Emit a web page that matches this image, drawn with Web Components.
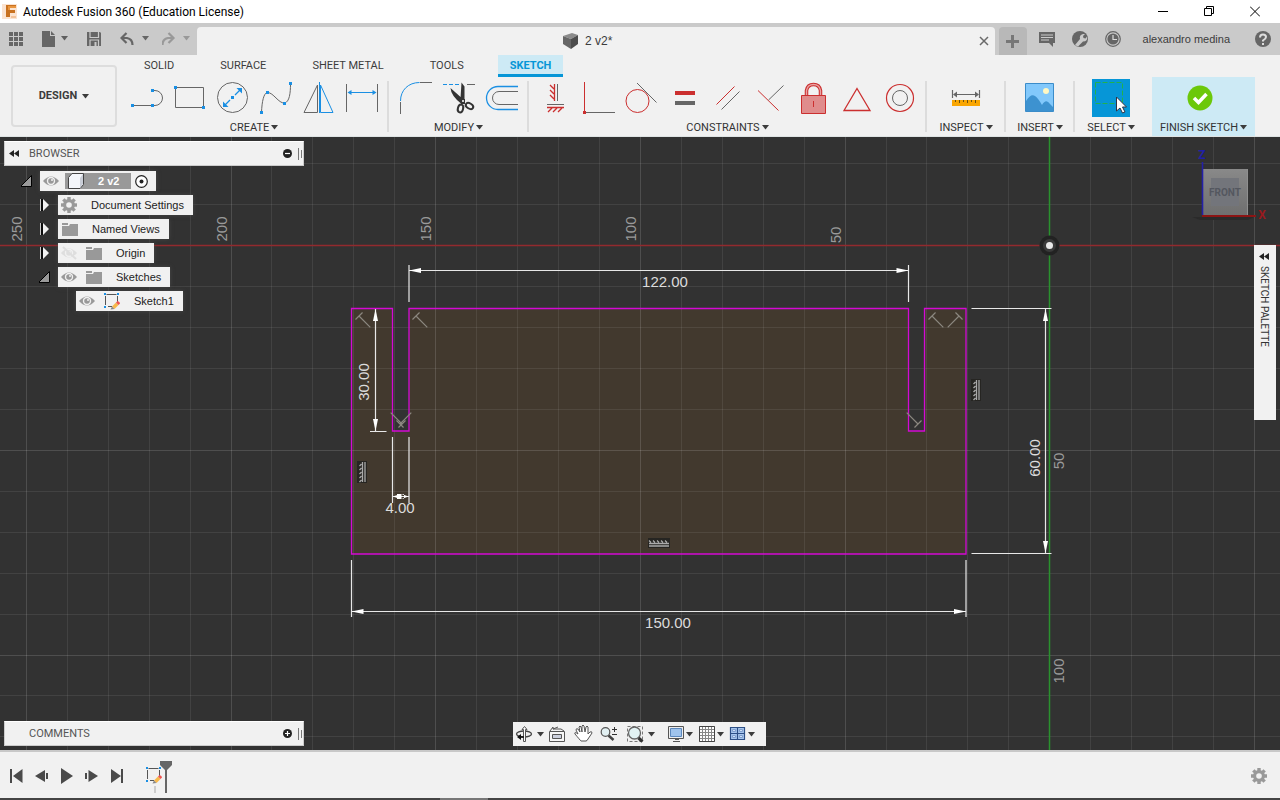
<!DOCTYPE html>
<html lang="en">
<head>
<meta charset="utf-8">
<title>Autodesk Fusion 360 (Education License)</title>
<style>
  html, body { margin: 0; height: 100%; }
  body { font: 11px/16px "Liberation Sans", Arial, sans-serif; color: #3c3c3c; background: #323232; }
</style>
</head>
<body>
<fusion-app></fusion-app>
<script>
const RESET = `
  *, *::before { box-sizing: border-box; }
  button { font: inherit; color: inherit; background: none; border: 0; padding: 0; margin: 0; display: flex; align-items: center; justify-content: center; }
  svg { display: block; flex: none; }
`;

/* Every icon: [viewBox, markup]. Drawn at one unit per pixel. */
const R = '#cb2f2f', G = '#666', B = '#1a8fe3';
const dot = (x, y) => `<rect x="${x - 1}" y="${y - 1}" width="3" height="3" fill="${B}"/>`;
const caret = (x, y, c = '#3c3c3c') => `<path d="M${x} ${y}h7l-3.5 4.500z" fill="${c}"/>`;
const eye = (c = '#999') => `<path d="M0 8Q8-1 16 8Q8 17 0 8z" fill="${c}"/><circle cx="8" cy="8" r="4.200" fill="#f1f1f1"/><circle cx="8" cy="8" r="2.800" fill="${c}"/><circle cx="9" cy="7" r="1" fill="#f1f1f1"/>`;
const teeth = [0, 45, 90, 135, 180, 225, 270, 315].map(a => `<path d="M6.300 0h3.400v4h-3.400z" transform="rotate(${a} 8 8)"/>`).join('');
const sketchIcon = `<path d="M3.500 2.500h10M14.500 4v6M9 14.500H5M2.500 4v9" stroke="#555" fill="none"/><path d="M1 1h2v2H1zM14 1h2v2h-2zM1 14h2v2H1z" fill="${B}"/><path d="M9 14.500l4-4 2.500 2.500-4 4z" fill="#f7b84b"/><path d="M13 10.500l1.500-1.500q2.500.500 2.500 2.500L15.500 13z" fill="#ef5350"/><path d="M9 14.500L7.500 17.500l4-.500z" fill="#888"/>`;
const ICONS = {
  app: ['2 2 16 17', `<rect x="2" y="3" width="15" height="15" fill="#fbe3d0"/><path d="M6 4h10v3h-6v2h5v3h-5v4H6z" fill="#c8711f"/><path d="M8 5h8v2h-6v2H8z" fill="#e9953f"/><path d="M11 15h5v2h-5z" fill="#f3c39a"/>`],
  min: ['1159 5 10 11', `<path d="M1159 10.500h10" stroke="#000"/>`],
  restore: ['1204 5 10 11', `<path d="M1204.500 7.500h7v7h-7zM1206.500 7.500v-2h7v7h-2" fill="none" stroke="#000"/>`],
  close: ['1250 5 10 11', `<path d="M1250 5.500l10 10M1260 5.500l-10 10" stroke="#000"/>`],
  apps: ['9 31 14 16', [0, 1, 2].map(i => [0, 1, 2].map(j => `<rect x="${9 + 5 * i}" y="${32 + 5 * j}" width="4" height="4"/>`).join('')).join('')],
  file: ['42 31 26 16', `<path d="M42 31h8v5h5v11H42zM51 31l4 4h-4z"/>${caret(61, 36, '#5f5f5f')}`],
  save: ['87 31 14 16', `<path d="M87 32h13l1 1v13h-14z"/><path d="M90 32v5.500h8.500V32M90 46v-6h8.500v6" fill="none" stroke="#cacaca" stroke-width="1.200"/><path d="M94.500 42h2v4h-2z" fill="#cacaca"/>`],
  undo: ['120 31 29 16', `<path d="M122 38h5q5.500 1 5.500 7" fill="none" stroke="#666" stroke-width="2.200"/><path d="M126.500 33l-5 5 5 5" fill="none" stroke="#666" stroke-width="2.200"/>${caret(142, 36, '#666')}`],
  redo: ['162 31 29 16', `<path d="M173 38h-5q-5.500 1-5.500 7" fill="none" stroke="#999" stroke-width="2.200"/><path d="M168.500 33l5 5-5 5" fill="none" stroke="#999" stroke-width="2.200"/>${caret(183, 36, '#999')}`],
  cube: ['565 33 16 16', `<path d="M565 36l9-3 6 2-7 4z" fill="#8b8b8b"/><path d="M565 36l8 3v10l-8-5z" fill="#666"/><path d="M573 39l7-4v9l-7 5z" fill="#4c4c4c"/>`],
  tabclose: ['979 36 10 10', `<path d="M980 37l8 8M988 37l-8 8" stroke="#6a6a6a" stroke-width="1.500"/>`],
  plus: ['1007 34 13 13', `<path d="M1007 39h5v-5h3v5h5v3h-5v5h-3v-5h-5z" fill="#777"/>`],
  comment: ['1039 31 16 16', `<path d="M1039 32h16v11h-2v4l-4-4h-10z"/><path d="M1041 35h12M1041 37.500h12M1041 40h8" stroke="#cacaca"/>`],
  wrench: ['1072 31 16 16', `<circle cx="1080" cy="39" r="8"/><path d="M1075 45l5-6q-1-4 3-5l2 0-2 2 .500 2 2 .500 1.500-2q1 5-4 5l-5 5z" fill="#cacaca"/>`],
  clock: ['1105 31 16 16', `<circle cx="1113" cy="39" r="7.300" fill="none" stroke="#666" stroke-width="1.200"/><circle cx="1113" cy="39" r="5.600"/><path d="M1113 35v4.500h4" stroke="#ddd" stroke-width="1.200" fill="none"/>`],
  help: ['1255 31 16 16', `<circle cx="1263" cy="39" r="8"/><path d="M1260 37.500q0-3 3-3t3 2.500q0 1.500-3 3.500v1" fill="none" stroke="#ddd" stroke-width="2"/><path d="M1262 43h2v2h-2z" fill="#ddd"/>`],

  line: ['125 78 43 40', `<path d="M132 105.500h20M152 90.500h3a7.500 7.500 0 0 1 0 15h-3" fill="none" stroke="${G}"/>${dot(132, 105)}${dot(152, 90)}${dot(152, 105)}`],
  rect: ['168 78 43 40', `<path d="M175.500 87.500h28v20h-28z" fill="none" stroke="${G}"/>${dot(175, 87)}${dot(203, 107)}`],
  circle: ['211 78 43 40', `<circle cx="232.500" cy="97.500" r="15" fill="none" stroke="${G}"/><path d="M225 105l5-5M235 95l5-5" stroke="${B}" stroke-width="1.300"/><path d="M223 107v-5.500l5.500 5.500zM242 88h-5.500l5.500 5.500z" fill="${B}"/>${dot(232, 97)}`],
  spline: ['254 78 43 40', `<path d="M261.500 112c.500-10 2-19 6-19.500 6 0 11 11 17 10.500 5-1 6-10 6-19" fill="none" stroke="${G}"/>${dot(261, 112)}${dot(267, 92)}${dot(284, 103)}${dot(290, 83)}`],
  mirror: ['297 78 43 40', `<path d="M317.500 85v27.500h-13.500z" fill="none" stroke="${G}"/><path d="M320.500 85v27.500h12.500zM319.500 82v31" fill="none" stroke="${B}"/>`],
  dimension: ['340 78 43 40', `<path d="M346.500 84v28M377.500 84v28" stroke="${G}"/><path d="M350 92.500h24" stroke="${B}"/><path d="M347.500 92.500l4-2.500v5zM376.500 92.500l-4-2.500v5z" fill="${B}"/>`],
  fillet: ['394 78 43 40', `<path d="M400.500 102v12M420 82.500h12" stroke="${G}"/><path d="M400.500 101c0-11 8-18.500 19-18.500" fill="none" stroke="${B}"/>`],
  trim: ['437 78 43 40', `<path d="M443 84.500h17" stroke="${B}" stroke-dasharray="4 2"/><path d="M467 84.500h8" stroke="${G}"/><path d="M461.500 82.500l3 4v14l-4-2zM450.500 88l14 12.500-3.500 3q-10-8-10.500-15.500z" fill="#333"/><path d="M461 99h4v5h-4z" fill="#333"/><circle cx="463" cy="101" r="1" fill="#fff"/><ellipse cx="460.500" cy="108.500" rx="2.600" ry="4" fill="none" stroke="#333" stroke-width="2" transform="rotate(15 460.500 108.500)"/><ellipse cx="469.500" cy="106" rx="2.600" ry="4" fill="none" stroke="#333" stroke-width="2" transform="rotate(-60 469.500 106)"/>`],
  offset: ['480 78 43 40', `<path d="M518 86.500H498a11.500 11.500 0 0 0 0 23H518" fill="none" stroke="${B}" stroke-width="1.300"/><path d="M518 91.500H499a6.500 6.500 0 0 0 0 13H518" fill="none" stroke="${G}"/>`],
  hv: ['534 78 43 40', `<path d="M557.500 84v17M547 104.500h17" stroke="${G}"/><path d="M554.500 84v17M547 107.500h17M554 89l-4-4M554 94l-4-4M554 99l-4-4M552 108l-4 4M557 108l-4 4M562 108l-4 4" stroke="${R}" stroke-width="1.300"/>`],
  coincident: ['577 78 43 40', `<path d="M584.500 82v30" stroke="${R}"/><path d="M586 112.500h29" stroke="${G}"/><path d="M583 111h3v3h-3z" fill="${R}"/>`],
  tangent: ['620 78 43 40', `<circle cx="637.500" cy="101" r="11.500" fill="none" stroke="${R}"/><path d="M637 83l19.500 19.500" stroke="${G}"/>`],
  equal: ['663 78 43 40', `<path d="M675 91h20v4h-20z" fill="${R}"/><path d="M675 101h20v4h-20z" fill="${G}"/>`],
  parallel: ['706 78 43 40', `<path d="M716.500 104.500l18-18" stroke="${R}"/><path d="M721.500 109.500l18-18" stroke="${G}"/>`],
  perpendicular: ['749 78 43 40', `<path d="M758 90.500l20.500 20" stroke="${R}"/><path d="M768.500 100l15-14.500" stroke="${G}"/>`],
  lock: ['792 78 43 40', `<path d="M806.500 95v-4.500q1-6 7-6t7 6V95" fill="none" stroke="${R}" stroke-width="3.500"/><path d="M806.500 95v-4.500q1-6 7-6t7 6V95" fill="none" stroke="#e9a3a3" stroke-width="1.400"/><path d="M801.500 95.500h24v18h-24z" fill="#e08c8c" stroke="${R}"/><path d="M813.500 101v6" stroke="${R}"/>`],
  midpoint: ['835 78 43 40', `<path d="M857 88.500l13 22h-26z" fill="none" stroke="${R}" stroke-width="1.300"/>`],
  concentric: ['878 78 43 40', `<circle cx="900" cy="98" r="13.500" fill="none" stroke="${R}" stroke-width="1.200"/><circle cx="900" cy="98" r="7.500" fill="none" stroke="${G}"/>`],
  inspect: ['945 78 43 40', `<path d="M952.500 90v8M979.500 90v8M955 94.500h22" stroke="${G}" stroke-width="1.200"/><path d="M953 94.500l4-3v6zM979 94.500l-4-3v6z" fill="${G}"/><path d="M952 100h28v6h-28z" fill="#f9a602"/><path d="M955.500 100v2M959.500 100v3M963.500 100v2M967.500 100v3M971.500 100v2M975.500 100v3" stroke="#6b5010"/>`],
  insert: ['1019 78 43 40', `<path d="M1025.500 83.500h28v28h-28z" fill="#82c8fb" stroke="#3b8cc9"/><path d="M1026 101q5-8 9-5 3 2 7 9 4-7 8-1l3 3v4h-27z" fill="#3d92d0"/><circle cx="1046" cy="91" r="3" fill="#fff8c4"/>`],
  select: ['1094 78 38 40', `<path d="M1094 79h38v38h-38z" fill="#0696d7"/><path d="M1097.500 82.500h27v21h-27z" fill="none" stroke="#22b14c" stroke-dasharray="5 2"/><path d="M1118.500 97v14l3.500-3 2.500 5 2.500-1-2.500-5h4z" fill="#fff" stroke="#334"/>`],
  finish: ['1182 78 43 40', `<circle cx="1200" cy="98" r="12.500" fill="#6cc80a"/><path d="M1194 98l4.500 4.500 8-8.500" fill="none" stroke="#fff" stroke-width="3.500"/>`],
  caret: ['0 0 7 5', `<path d="M0 0h7L3.500 4.500z" fill="#3c3c3c"/>`],

  collapse: ['0 0 10 7', `<path d="M5 0v7L0 3.500zM10 0v7L5 3.500z" fill="#222"/>`],
  minus: ['0 0 9 9', `<circle cx="4.500" cy="4.500" r="4.500" fill="#222"/><path d="M2 4.500h5" stroke="#fff" stroke-width="1.200"/>`],
  add: ['0 0 9 9', `<circle cx="4.500" cy="4.500" r="4.500" fill="#222"/><path d="M2 4.500h5M4.500 2v5" stroke="#fff" stroke-width="1.200"/>`],
  grip: ['0 0 4 12', `<path d="M.500 0v12M3.500 2v8" stroke="#777"/>`],
  open: ['0 0 11 12', `<path d="M10.500.500v11h-11z" fill="#999" stroke="#000"/>`],
  shut: ['0 0 11 12', `<path d="M1.500 0v12" stroke="#ccc"/><path d="M4 0l6 6-6 6z" fill="#f1f1f1"/><path d="M3 0v12" stroke="#000" stroke-width="1.500"/>`],
  eye: ['0 0 16 16', eye()],
  hidden: ['0 0 16 16', `<g>${eye('#dedede')}</g><path d="M2 2l13 12" stroke="#dedede" stroke-width="2"/>`],
  gear: ['0 0 16 16', `<g fill="#999">${teeth}<circle cx="8" cy="8" r="6"/></g><circle cx="8" cy="8" r="2.800" fill="#f1f1f1"/>`],
  folder: ['0 0 17 16', `<path d="M1 2h6v2H1zM1 5h7l1-2h8v12H1z" fill="#999"/>`],
  body: ['0 0 16 16', `<path d="M.500 4.500L4 .500h11.500v11l-3.500 4H.500z" fill="#f4f6fa" stroke="#444"/><path d="M12 5l3-4v10l-3 4z" fill="#c9cdd6"/>`],
  radio: ['0 0 13 13', `<circle cx="6.500" cy="6.500" r="5.800" fill="#fff" stroke="#222" stroke-width="1.200"/><circle cx="6.500" cy="6.500" r="2" fill="#222"/>`],
  sketch: ['0 0 17 18', sketchIcon],

  orbit: ['513 722 33 24', `<ellipse cx="524" cy="734" rx="7.500" ry="3" fill="none" stroke="#444" stroke-width="1.300"/><path d="M523.500 741.500v-12h-1.500l2.500-3 2.500 3h-1.500v12z" fill="#fff" stroke="#555"/><path d="M517 737l4-3v6z" fill="#111"/><path d="M520 737h4" stroke="#111" stroke-width="1.500"/>${caret(537, 732)}`],
  look: ['546 722 24 24', `<path d="M549.500 731.500h15v10h-15z" fill="#f6f6f6" stroke="#555"/><path d="M552.500 734.500h9v4h-9z" fill="#ccd0dd" stroke="#555"/><path d="M550 731l3-4v2h8l3 2M553 729l5-2" fill="none" stroke="#555"/>`],
  pan: ['570 722 26 24', `<path d="M578 734l-2-4q0-2 2-1l2 3-1-5q1-2 2 0l1 5 0-6q1-2 2 0l1 6 1-5q1-2 2 0l0 7 2-2q2-1 2 1l-4 6q-1 2-2 2h-5q-1-1-6-7-1-3 3 0z" fill="#fff" stroke="#555"/>`],
  zoom: ['596 722 26 24', `<circle cx="605.500" cy="732" r="4.300" fill="#e2f0f2" stroke="#555" stroke-width="1.200"/><path d="M608.500 735.500l5 4.500" stroke="#444" stroke-width="2.500"/><path d="M612 729.500h5M614.500 727v5M612 734.500h5" stroke="#333"/>`],
  fit: ['622 722 39 24', `<path d="M627.500 726.500h15v15h-15z" fill="none" stroke="#777" stroke-dasharray="3 2"/><circle cx="634.500" cy="733" r="6" fill="#e2f2f3" stroke="#666" stroke-width="1.300"/><path d="M638.500 738l4 3.500" stroke="#333" stroke-width="3"/>${caret(648, 732)}`],
  display: ['661 722 34 24', `<path d="M668.500 726.500h15v12h-15z" fill="#eee" stroke="#555"/><path d="M670.500 728.500h11v8h-11z" fill="#9fc3ec" stroke="#5c88bd"/><path d="M673 741.500h7M675 739.500h4" stroke="#555"/>${caret(686, 732)}`],
  grid: ['695 722 31 24', `<path d="M699.500 726.500h15v15h-15zM702.500 726v16M705.500 726v16M708.500 726v16M711.500 726v16M699 729.500h16M699 732.500h16M699 735.500h16M699 738.500h16" fill="#fff" stroke="#888"/><path d="M699.500 726.500h15v15h-15z" fill="none" stroke="#444"/>${caret(717, 732)}`],
  views: ['726 722 40 24', `<path d="M730.500 727.500h7v6h-7zM737.500 727.500h7v6h-7zM730.500 733.500h7v6h-7zM737.500 733.500h7v6h-7z" fill="#a9c7ee" stroke="#2d4f86" stroke-width="1.200"/><path d="M732.500 729.500h3v2h-3zM739.500 729.500h3v2h-3zM732.500 735.500h3v2h-3zM739.500 735.500h3v2h-3z" fill="#cfe0f5" stroke="#7f9fcf"/>${caret(748, 732)}`],

  first: ['0 0 14 14', `<path d="M1 0v14" stroke="#4a4a4a" stroke-width="2"/><path d="M12.500 0v14L3 7z" fill="#4a4a4a"/>`],
  prev: ['0 0 14 14', `<path d="M10 1v12L0 7z" fill="#4a4a4a"/><path d="M12 4v6" stroke="#4a4a4a" stroke-width="2"/>`],
  play: ['0 0 14 16', `<path d="M1 0v16l12-8z" fill="#4a4a4a"/>`],
  next: ['0 0 14 14', `<path d="M3.500 1v12L13 7z" fill="#4a4a4a"/><path d="M1 4v6" stroke="#4a4a4a" stroke-width="2"/>`],
  last: ['0 0 14 14', `<path d="M12 0v14" stroke="#4a4a4a" stroke-width="2"/><path d="M1 0v14l10-7z" fill="#4a4a4a"/>`],
  feature: ['146 759 28 34', `<g transform="translate(145 766)">${sketchIcon}</g><path d="M154 786h2v7h-2z" fill="#ccc"/><path d="M160 761h12v4l-5 5v23h-2v-23l-5-5z" fill="#666"/>`],
};
const icon = name => {
  const [vb, body] = ICONS[name], [, , w, h] = vb.split(' ');
  return `<svg width="${w}" height="${h}" viewBox="${vb}" fill="#666" aria-hidden="true">${body}</svg>`;
};

function define(tag, css, render) {
  customElements.define(tag, class extends HTMLElement {
    constructor() { super(); this.attachShadow({ mode: 'open' }); }
    connectedCallback() {
      const t = document.createElement('template');
      t.innerHTML = `<style>${RESET}${css}</style>${render(this)}`;
      this.shadowRoot.replaceChildren(t.content.cloneNode(true));
    }
  });
}
const btn = (name, label, cls = '') => `<button class="${cls}" aria-label="${label}">${icon(name)}</button>`;

define('title-bar', `
  :host { display: flex; align-items: center; height: 23px; padding: 0 20px 0 2px; background: #fff; color: #000; font: 12px/16px Roboto, sans-serif; }
  span { margin-left: 5px; flex: 1; }
  .win { display: flex; gap: 36px; }
`, () => `${icon('app')}<span><slot></slot></span>
  <div class="win">${btn('min', 'Minimize')}${btn('restore', 'Restore')}${btn('close', 'Close')}</div>`);

define('app-bar', `
  :host { display: flex; height: 32px; background: #cacaca; }
  .quick { display: flex; align-items: center; padding-left: 9px; width: 197px; flex: none; }
  .quick button + button { margin-left: 19px; }
  .quick button:nth-child(5) { margin-left: 13px; }
  .tab { flex: 1; margin-top: 4px; background: #f1f1f1; border-radius: 4px 4px 0 0; display: flex; align-items: center; padding: 0 6px 0 0; font-size: 12px; }
  .doc { flex: 1; display: flex; align-items: center; justify-content: center; gap: 6px; }
  .new { width: 28px; margin: 4px 12px 0 4px; background: #b8b8b8; border-radius: 4px 4px 0 0; }
  .tools { display: flex; align-items: center; gap: 17px; }
  .user { padding: 0 25px 0 22px; }
  .help { padding-right: 9px; }
`, () => `<div class="quick">${btn('apps', 'Data panel')}${btn('file', 'File')}${btn('save', 'Save')}${btn('undo', 'Undo')}${btn('redo', 'Redo')}</div>
  <div class="tab"><div class="doc">${icon('cube')}<span>2 v2*</span></div>${btn('tabclose', 'Close tab')}</div>
  ${btn('plus', 'New tab', 'new')}
  <div class="tools">${btn('comment', 'Comments')}${btn('wrench', 'Extensions')}${btn('clock', 'Job status')}</div>
  <button class="user">alexandro medina</button>${btn('help', 'Help', 'help')}`);

define('ribbon-group', `
  :host { display: flex; flex-direction: column; align-items: center; }
  .icons { display: flex; height: 42px; align-items: flex-start; }
  .label { gap: 2px; height: 16px; font: 11px/16px Roboto, sans-serif; color: #333; white-space: nowrap; }
  .label svg { margin-bottom: 2px; }
`, el => `<div class="icons">${el.getAttribute('icons').split(' ').map(n => btn(n, n)).join('')}</div>
  <button class="label"><slot></slot>${icon('caret')}</button>`);

define('tool-ribbon', `
  :host { display: flex; background: #f1f1f1; height: 82px; padding-left: 11px; border-bottom: 1px solid #dfe4e4; font: 11px/16px Roboto, sans-serif; }
  .design { width: 106px; height: 62px; margin: 10px 8px 0 0; border: 2px solid #ddd; border-radius: 4px; gap: 5px; font-weight: 700; flex: none; }
  .main { flex: 1; display: flex; flex-direction: column; }
  nav { display: flex; height: 22px; padding-left: 7px; }
  nav button { padding: 0 12px; margin-right: 22px; height: 22px; }
  nav .on { background: #cdeaf5; color: #0696d7; font-weight: 700; border-bottom: 3px solid #0696d7; padding-top: 3px; }
  .row { display: flex; height: 59px; }
  hr { width: 2px; height: 51px; margin: 4px 5px 0 4px; border: 0; background: #dcdcdc; flex: none; }
  ribbon-group { padding-top: 1px; flex: none; }
  .w68 { width: 68px; } .w58 { width: 58px; } .w62 { width: 62px; }
  .done { width: 103px; margin-left: 10px; background: #cdeaf5; }
`, () => `<button class="design">DESIGN ${icon('caret')}</button>
  <div class="main">
    <nav><button>SOLID</button><button>SURFACE</button><button>SHEET METAL</button><button>TOOLS</button><button class="on">SKETCH</button></nav>
    <div class="row">
      <ribbon-group icons="line rect circle spline mirror dimension">CREATE</ribbon-group><hr>
      <ribbon-group icons="fillet trim offset">MODIFY</ribbon-group><hr>
      <ribbon-group icons="hv coincident tangent equal parallel perpendicular lock midpoint concentric">CONSTRAINTS</ribbon-group><hr>
      <ribbon-group class="w68" icons="inspect">INSPECT</ribbon-group><hr>
      <ribbon-group class="w58" icons="insert">INSERT</ribbon-group><hr>
      <ribbon-group class="w62" icons="select">SELECT</ribbon-group>
      <ribbon-group class="done" icons="finish">FINISH SKETCH</ribbon-group>
    </div>
  </div>`);

define('panel-bar', `
  :host { display: flex; align-items: center; width: 300px; height: 25px; padding: 0 1px 0 4px; background: #f1f1f1; border: 1px solid #ccc; border-top-color: #fff; font: 11px/16px Roboto, sans-serif; color: #555; }
  .lead { width: 20px; justify-content: flex-start; }
  span { flex: 1; }
  .grip { margin-left: 6px; }
`, el => `<button class="lead" aria-label="Collapse">${el.hasAttribute('collapsible') ? icon('collapse') : ''}</button>
  <span><slot></slot></span>${btn(el.getAttribute('action'), 'Toggle panel')}<div class="grip">${icon('grip')}</div>`);

define('tree-row', `
  :host { display: flex; align-items: center; height: 24px; padding-left: calc(var(--level) * 18px); color: #222; }
  .toggle { width: 19px; margin-left: -1px; justify-content: flex-start; }
  .box { display: flex; align-items: center; height: 20px; background: #f1f1f1; padding: 0 9px 0 3px; box-shadow: 0 0 4px #4a4a4a; white-space: nowrap; }
  .box svg { margin-right: 8px; }
  .name { margin-left: 6px; }
  .sel { display: flex; align-items: center; height: 16px; margin: 0 4px 0 -2px; padding: 0 12px 0 3px; background: #999; color: #fff; font-weight: 700; }
  .sel svg { margin-right: 8px; }
  .root { padding-right: 8px; } .root > button svg { margin: 0; }
`, el => {
  const icons = el.getAttribute('icons').split(' ').map(icon);
  const t = el.getAttribute('toggle');
  const toggle = t ? btn(t, 'Expand', 'toggle') : '<span class="toggle"></span>';
  return toggle + (el.hasAttribute('root')
    ? `<div class="box root">${icons[0]}<div class="sel">${icons[1]}<span class="name"><slot></slot></span></div>${btn('radio', 'Activate')}</div>`
    : `<div class="box">${icons.join('')}<span class="name"><slot></slot></span></div>`);
});

define('nav-bar', `
  :host { display: flex; background: #f1f1f1; height: 24px; }
`, () => ['orbit', 'look', 'pan', 'zoom', 'fit', 'display', 'grid', 'views'].map(n => btn(n, n)).join(''));

define('sketch-palette', `
  :host { display: flex; flex-direction: column; align-items: center; gap: 6px; width: 22px; height: 175px; padding: 8px 2px 0 0; box-sizing: border-box; background: #f1f1f1; font: 10px/16px Roboto, sans-serif; color: #333; }
  span { writing-mode: vertical-rl; }
`, () => `${btn('collapse', 'Expand palette')}<span><slot></slot></span>`);

define('sketch-drawing', `
  :host { display: block; }
  svg { width: 100%; height: 100%; }
  text { font: 15px "Liberation Sans", Arial, sans-serif; text-anchor: middle; fill: #dcdcdc; }
  .axis text { fill: #9a9a9a; }
  .cube text { font: 700 10px Roboto, sans-serif; fill: #54575f; }
  .cube .letter { font-size: 12px; }
`, () => {
  let grid = '';
  for (let i = 0; i < 31; i++) {
    const x = Math.round(1254 - i * 40.94) + .5, major = i % 5 === 0;
    grid += `<path d="M${x} 137V750" stroke="#fff" stroke-opacity="${major ? .14 : .08}"/>`;
  }
  for (let i = -2; i < 13; i++) {
    const y = Math.round(245 + i * 40.95) + .5, major = i % 5 === 0;
    if (i) grid += `<path d="M0 ${y}H1280" stroke="#fff" stroke-opacity="${major ? .14 : .08}"/>`;
  }
  const v = (x, y, s) => `<text transform="translate(${x} ${y}) rotate(-90)" dy="5">${s}</text>`;
  const tri = (x, y, a) => `<path d="M0 0l12-2.500v5z" transform="translate(${x} ${y}) rotate(${a})" fill="#fff"/>`;
  const perp = (x, y, a) => `<path d="M-5 0h10M0 0v16" transform="translate(${x} ${y}) rotate(${a})"/>`;
  const fixed = (x, y, a) => `<g transform="translate(${x} ${y}) rotate(${a})"><path d="M-11-5h22V5h-22z" fill="#262522"/><path d="M-10 .500h20M-10 3h20M-10-2.500l2 2M-6-2.500l2 2M-2-2.500l2 2M2-2.500l2 2M6-2.500l2 2" stroke="#aaa" stroke-width="1.300" fill="none"/></g>`;
  return `<svg viewBox="0 137 1280 613" preserveAspectRatio="xMaxYMin slice" role="img" aria-label="Sketch with dimensions">
    <defs><linearGradient id="c" x1="0" y1="0" x2="0" y2="1"><stop offset="0" stop-color="#898989"/><stop offset="1" stop-color="#6f6f6f"/></linearGradient></defs>
    <path d="M0 137h1280v613H0z" fill="#323232"/>
    <path d="M351.500 308.500h41v122.500h16.500v-122.500h499.500v122.500h16v-122.500H966V554H351.500z" fill="#42392e"/>
    ${grid}
    <path d="M0 245.500H1280" stroke="#922a2e" stroke-width="1.300"/><path d="M1049.500 137V750" stroke="#2a912e" stroke-width="1.500"/>
    <g class="axis">${v(17, 229, 250)}${v(222, 229, 200)}${v(426, 229, 150)}${v(631, 229, 100)}${v(836, 235, 50)}${v(1059, 461, 50)}${v(1059, 671, 100)}</g>
    <path d="M351.500 308.500h41v122.500h16.500v-122.500h499.500v122.500h16v-122.500H966V554H351.500z" fill="none" stroke="#d40ad4" stroke-width="1.300"/>
    <g fill="none" stroke="#8c8880" stroke-width="1.200">
      ${perp(359, 316, -45)}${perp(416, 316, -45)}${perp(932, 316, -45)}${perp(959, 316, 45)}${perp(918, 424, 135)}${perp(402, 424, 135)}${perp(400, 424, 225)}
    </g>
    ${fixed(362, 472, -90)}${fixed(976, 390, -90)}${fixed(659, 543, 0)}
    <g stroke="#e8e8e8" stroke-width="1.200" fill="none">
      <path d="M409 265v37M908.500 265v37M409 270.500h499M375.500 309v122M370 431.500h16.500M392.500 437v66M409 437v66M392.500 496.500h16.500M351.500 560v57M966 560v57M351.500 611.500h614.500M971.500 308.500h80M971.500 553.500h80M1045.500 309v244"/>
    </g>
    ${tri(409, 270.5, 0)}${tri(908.5, 270.5, 180)}${tri(375.5, 309, 90)}${tri(375.5, 431, -90)}${tri(351.5, 611.5, 0)}${tri(966, 611.5, 180)}${tri(1045.5, 309, 90)}${tri(1045.5, 553, -90)}
    <path d="M393 496.500l7-2.500v5zM408.500 496.500l-7-2.500v5zM397 494h7v5h-7z" fill="#fff"/>
    <text x="665" y="287">122.00</text><text x="668" y="628">150.00</text><text x="400" y="513">4.00</text>
    ${v(364, 382, '30.00')}${v(1035, 458, '60.00')}
    <circle cx="1049.500" cy="245.500" r="10" fill="#222"/><circle cx="1049.500" cy="245.500" r="6.500" fill="#3a3a3a"/><circle cx="1049.500" cy="245.500" r="3.500" fill="#e8e8e8"/>
    <g class="cube"><path d="M1192 217h62l-6 3h-48z" fill="#2a2a2a"/><path d="M1203 169h45v46h-45z" fill="url(#c)"/><path d="M1211 178h28v28h-28z" fill="#73757b"/><path d="M1247.500 169v46" stroke="#8f8f8f"/>
      <text x="1225" y="196">FRONT</text>
      <path d="M1202.500 162v53" stroke="#2420a8" stroke-width="1.600"/><path d="M1202 216h54" stroke="#8c1414" stroke-width="2"/>
      <text class="letter" x="1202" y="159" style="fill:#2020a8">Z</text><text class="letter" x="1262" y="219" style="fill:#981a1e">X</text></g>
  </svg>`;
});

define('design-canvas', `
  :host { display: block; position: relative; flex: 1; min-height: 613px; overflow: hidden; }
  sketch-drawing { position: absolute; inset: 0; }
  .browser { position: absolute; left: 4px; top: 4px; }
  .browser div { padding: 3px 0 0 18px; }
  .comments { position: absolute; left: 4px; bottom: 4px; }
  nav-bar { position: absolute; left: 50%; bottom: 4px; margin-left: -127px; }
  sketch-palette { position: absolute; right: 4px; top: 108px; }
`, () => `<sketch-drawing></sketch-drawing>
  <div class="browser"><panel-bar collapsible action="minus">BROWSER</panel-bar>
    <div>
    <tree-row style="--level:0" toggle="open" icons="eye body" root>2 v2</tree-row>
    <tree-row style="--level:1" toggle="shut" icons="gear">Document Settings</tree-row>
    <tree-row style="--level:1" toggle="shut" icons="folder">Named Views</tree-row>
    <tree-row style="--level:1" toggle="shut" icons="hidden folder">Origin</tree-row>
    <tree-row style="--level:1" toggle="open" icons="eye folder">Sketches</tree-row>
    <tree-row style="--level:2" icons="eye sketch">Sketch1</tree-row>
    </div>
  </div>
  <panel-bar class="comments" action="add">COMMENTS</panel-bar>
  <nav-bar></nav-bar>
  <sketch-palette>SKETCH PALETTE</sketch-palette>`);

define('time-line', `
  :host { display: flex; position: relative; align-items: center; height: 50px; box-sizing: border-box; padding: 2px 13px 0 10px; background: #f1f1f1; border-top: 2px solid #c8c8c8; border-bottom: 2px solid #444; }
  :host::after { content: ""; position: absolute; left: 440px; bottom: -2px; width: 48px; height: 2px; background: #777; }
  .play { display: flex; align-items: center; gap: 11px; margin-right: 22px; }
  .feature { flex: 1; justify-content: flex-start; }
`, () => `<div class="play">${btn('first', 'First')}${btn('prev', 'Previous')}${btn('play', 'Play')}${btn('next', 'Next')}${btn('last', 'Last')}</div>
  ${btn('feature', 'Sketch1', 'feature')}${btn('gear', 'Settings')}`);

define('fusion-app', `
  :host { display: flex; flex-direction: column; min-height: 100vh; }
  time-line, title-bar, app-bar, tool-ribbon { flex: none; }
`, () => `<title-bar>Autodesk Fusion 360 (Education License)</title-bar>
  <app-bar></app-bar><tool-ribbon></tool-ribbon><design-canvas></design-canvas><time-line></time-line>`);
</script>
</body>
</html>
